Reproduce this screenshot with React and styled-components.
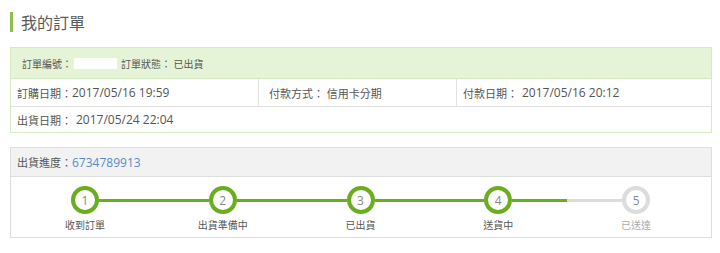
import React from 'react';
import styled, { createGlobalStyle } from 'styled-components';

const GlobalStyle = createGlobalStyle`
  body {
    margin: 0;
    background: #fff;
    font-family: "Open Sans", "Noto Sans CJK TC", sans-serif;
    color: #555;
  }
`;

const green = '#6aad1e';

const Page = styled.div`
  padding: 12px 8px 0 10px;
  width: 720px;
  box-sizing: border-box;
`;

const Title = styled.h1`
  margin: 0;
  height: 20px;
  line-height: 20px;
  border-left: 3px solid #8cc152;
  padding-left: 8px;
  font-size: 16px;
  font-weight: normal;
  color: #5a5a5a;
  font-family: "Noto Sans CJK TC", sans-serif;
`;

const InfoBox = styled.div`
  margin-top: 15px;
  border: 1px solid #d5eac2;
  font-size: 11px;
`;

const InfoHead = styled.div`
  display: flex;
  align-items: center;
  gap: 2px;
  height: 30px;
  padding-left: 11px;
  background: #e5f3d7;
  border-bottom: 1px solid #d5eac2;
  font-size: 10px;
`;

const Redacted = styled.span`
  display: inline-block;
  width: 43px;
  height: 11px;
  background: #fff;
  margin-right: 2px;
`;

const InfoRow = styled.div`
  display: grid;
  grid-template-columns: 247px 198px 1fr;
  height: ${(p) => p.$h}px;
  & + & {
    border-top: 1px solid #e2e2e2;
  }
`;

const Cell = styled.div`
  display: flex;
  align-items: center;
  padding-left: ${(p) => p.$pad || 6}px;
  & + & {
    border-left: 1px solid #e2e2e2;
  }
`;

const Num = styled.span`
  font-size: 12px;
  margin-left: ${(p) => p.$gap || 0}px;
`;

const Progress = styled.div`
  margin-top: 14px;
  border: 1px solid #dedede;
`;

const ProgressHead = styled.div`
  display: flex;
  align-items: center;
  height: 28px;
  padding-left: 6px;
  background: #f2f2f2;
  border-bottom: 1px solid #dedede;
  font-size: 11px;
`;

const TrackNo = styled.span`
  color: #5a8ac6;
  font-size: 12px;
`;

const Steps = styled.div`
  display: flex;
  padding: 9px 6px 5px 5px;
`;

const Step = styled.div`
  flex: 1;
  display: flex;
  flex-direction: column;
  align-items: center;
`;

const Track = styled.div`
  display: flex;
  align-items: center;
  width: 100%;
`;

const Seg = styled.div`
  flex: 1;
  height: 3px;
  background: ${(p) => (p.$hidden ? 'transparent' : p.$on ? green : '#dcdcdc')};
`;

const Circle = styled.div`
  width: 20px;
  height: 20px;
  border-radius: 50%;
  border: 4px solid ${(p) => (p.$on ? green : '#dcdcdc')};
  display: flex;
  align-items: center;
  justify-content: center;
  font-size: 12px;
  color: #888;
  background: #fff;
`;

const Label = styled.div`
  margin-top: 4px;
  font-size: 10px;
  line-height: 14px;
  color: ${(p) => (p.$on ? '#555' : '#aaa')};
  font-family: "Noto Sans CJK TC", sans-serif;
`;

const steps = ['收到訂單', '出貨準備中', '已出貨', '送貨中', '已送達'];
const current = 4;

export default function App() {
  return (
    <Page>
      <GlobalStyle />
      <Title>我的訂單</Title>
      <InfoBox>
        <InfoHead>
          訂單編號：<Redacted />訂單狀態： 已出貨
        </InfoHead>
        <InfoRow $h={27}>
          <Cell>
            訂購日期：<Num>2017/05/16 19:59</Num>
          </Cell>
          <Cell $pad={10}>付款方式： 信用卡分期</Cell>
          <Cell>
            付款日期：<Num $gap={4}>2017/05/16 20:12</Num>
          </Cell>
        </InfoRow>
        <InfoRow $h={25}>
          <Cell>
            出貨日期：<Num $gap={4}>2017/05/24 22:04</Num>
          </Cell>
        </InfoRow>
      </InfoBox>
      <Progress>
        <ProgressHead>
          出貨進度：<TrackNo>6734789913</TrackNo>
        </ProgressHead>
        <Steps>
          {steps.map((s, i) => {
            const n = i + 1;
            const on = n <= current;
            return (
              <Step key={s}>
                <Track>
                  <Seg $hidden={i === 0} $on={on} />
                  <Circle $on={on}>{n}</Circle>
                  <Seg $hidden={i === steps.length - 1} $on={on} />
                </Track>
                <Label $on={on}>{s}</Label>
              </Step>
            );
          })}
        </Steps>
      </Progress>
    </Page>
  );
}
